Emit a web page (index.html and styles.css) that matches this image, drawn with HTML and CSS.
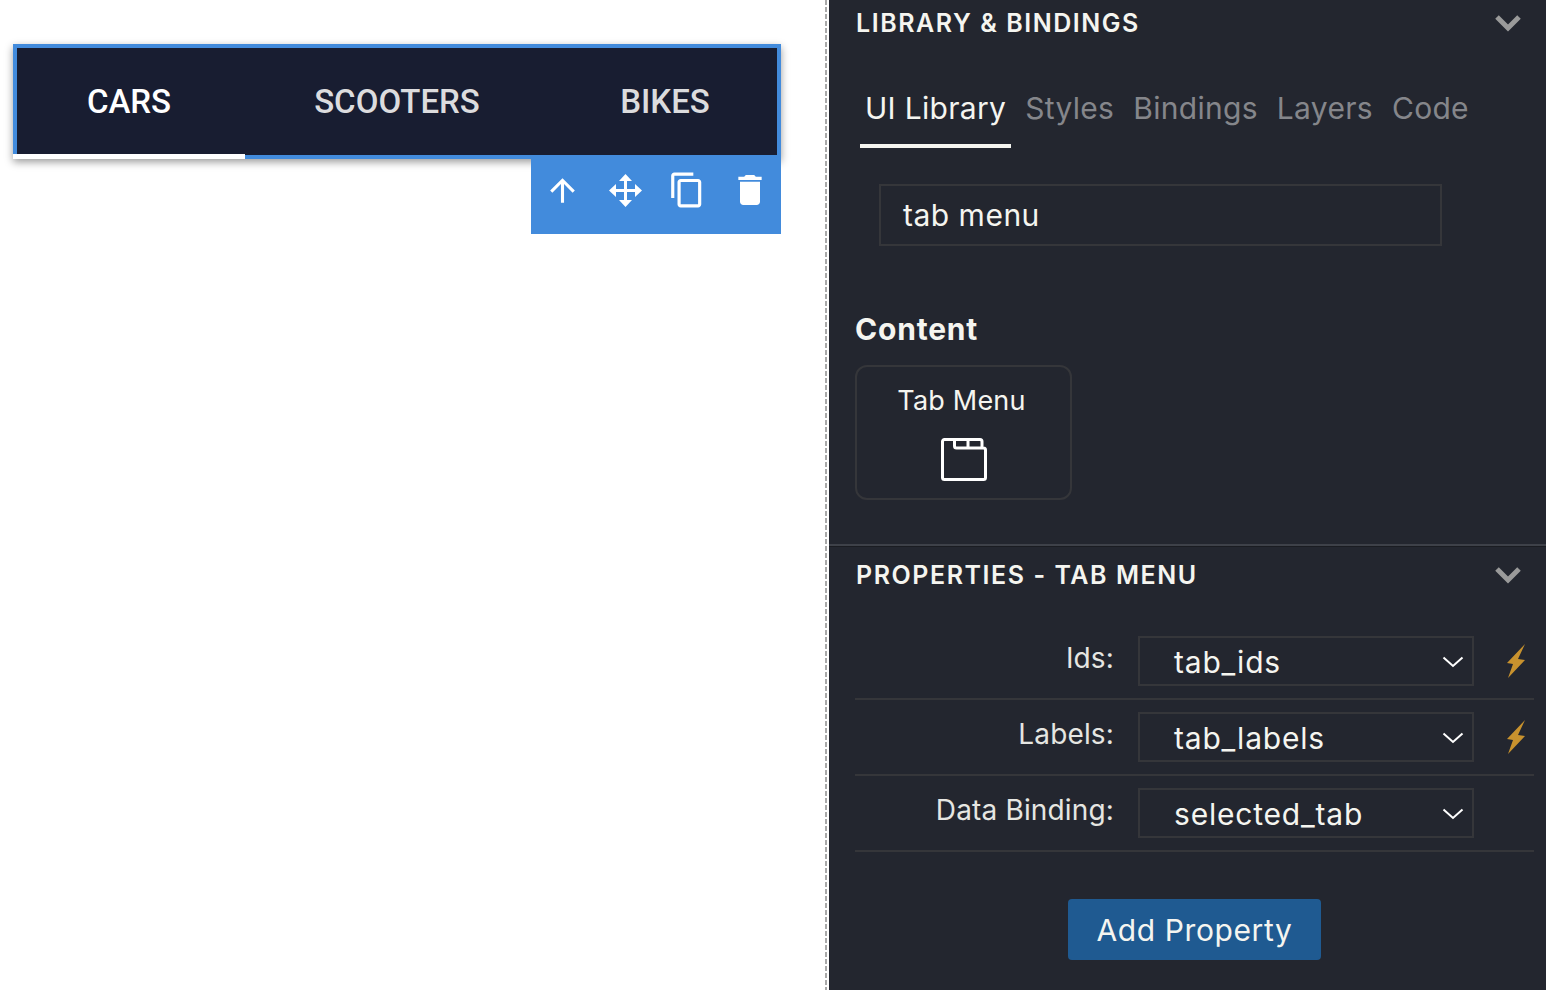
FILE: index.html
```html
<!DOCTYPE html>
<html lang="en">
<head>
    <meta charset="UTF-8">
    <title>Library and Bindings</title>
    <link rel="stylesheet" href="styles.css">
</head>
<body>
    <div class="app">
        <div class="canvas">
            <div class="selected">
                <div class="tabmenu">
                    <div class="tabitem tabitem-active">CARS</div>
                    <div class="tabitem tabitem-wide">SCOOTERS</div>
                    <div class="tabitem tabitem-last">BIKES</div>
                </div>
                <div class="toolbar">
                    <span class="toolbtn">
                        <svg width="37" height="37" viewBox="0 0 24 24"><path d="M4 12l1.41 1.41L11 7.83V20h2V7.83l5.58 5.59L20 12l-8-8-8 8z"/></svg>
                    </span>
                    <span class="toolbtn">
                        <svg class="moveicon" width="33" height="33" viewBox="0 0 33 33"><path d="M16.5 0L23 7h-5v8h8v-5l7 6.5-7 6.5v-5h-8v8h5l-6.5 7-6.5-7h5v-8H7v5L0 16.500 7 10v5h8V7h-5z"/></svg>
                    </span>
                    <span class="toolbtn">
                        <svg width="38" height="38" viewBox="0 0 24 24"><path d="M16 1H4c-1.1 0-2 .9-2 2v14h2V3h12V1zm3 4H8c-1.1 0-2 .9-2 2v14c0 1.1.9 2 2 2h11c1.1 0 2-.9 2-2V7c0-1.1-.9-2-2-2zm0 16H8V7h11v14z"/></svg>
                    </span>
                    <span class="toolbtn">
                        <svg width="40" height="40" viewBox="0 0 24 24"><path d="M6 19c0 1.1.9 2 2 2h8c1.1 0 2-.9 2-2V7H6v12zM19 4h-3.5l-1-1h-5l-1 1H5v2h14V4z"/></svg>
                    </span>
                </div>
            </div>
        </div>

        <div class="panel">
            <section class="library">
                <div class="panelhead">
                    <h2>LIBRARY &amp; BINDINGS</h2>
                    <svg class="caret" width="28" height="18" viewBox="0 0 28 18"><path d="M3 3l11 11L25 3"/></svg>
                </div>
                <div class="paneltabs">
                    <a class="paneltab paneltab-active">UI Library</a>
                    <a class="paneltab">Styles</a>
                    <a class="paneltab">Bindings</a>
                    <a class="paneltab">Layers</a>
                    <a class="paneltab">Code</a>
                </div>
                <div class="search">tab menu</div>
                <h3>Content</h3>
                <div class="card">
                    <div class="cardlabel">Tab Menu</div>
                    <svg class="cardicon" width="46" height="43" viewBox="0 0 46 43"><path d="M3.500 1.500H39a2 2 0 0 1 2 2V10h1.500a2 2 0 0 1 2 2v27.500a2 2 0 0 1-2 2h-39a2 2 0 0 1-2-2v-36a2 2 0 0 1 2-2zM13.500 1.500V8a2 2 0 0 0 2 2H41M27 1.500V10"/></svg>
                </div>
            </section>

            <section class="props">
                <div class="panelhead">
                    <h2>PROPERTIES - TAB MENU</h2>
                    <svg class="caret" width="28" height="18" viewBox="0 0 28 18"><path d="M3 3l11 11L25 3"/></svg>
                </div>
                <div class="proprows">
                    <div class="proprow">
                        <label>Ids:</label>
                        <div class="select">tab_ids<svg width="22" height="12" viewBox="0 0 22 12"><path d="M1.5 1.5L11 10l9.5-8.500"/></svg></div>
                        <svg class="bolt" width="18" height="34" viewBox="0 0 18 34"><path d="M18 0L0 19l6 1-5 14 17-18-7-1z"/></svg>
                    </div>
                    <div class="proprow">
                        <label>Labels:</label>
                        <div class="select">tab_labels<svg width="22" height="12" viewBox="0 0 22 12"><path d="M1.5 1.5L11 10l9.5-8.500"/></svg></div>
                        <svg class="bolt" width="18" height="34" viewBox="0 0 18 34"><path d="M18 0L0 19l6 1-5 14 17-18-7-1z"/></svg>
                    </div>
                    <div class="proprow">
                        <label>Data Binding:</label>
                        <div class="select">selected_tab<svg width="22" height="12" viewBox="0 0 22 12"><path d="M1.5 1.5L11 10l9.5-8.500"/></svg></div>
                    </div>
                </div>
                <div class="addwrap">
                    <button class="addbtn">Add Property</button>
                </div>
            </section>
        </div>
    </div>
</body>
</html>
```

FILE: styles.css
```css
* {
    margin: 0;
    padding: 0;
    box-sizing: border-box;
}
html, body {
    height: 100%;
    overflow: hidden;
}
body {
    background-color: #fff;
    font-family: "Inter", "Liberation Sans", sans-serif;
}
.app {
    display: flex;
    height: 990px;
}

/* left side, the page being edited */
.canvas {
    width: 829px;
    flex: none;
    padding: 44px 0 0 13px;
    background-color: #fff;
    background-image: repeating-linear-gradient(to bottom, #a9a9a9 0, #a9a9a9 5px, #fff 5px, #fff 7px);
    background-size: 2px 100%;
    background-position: 825px 0;
    background-repeat: no-repeat;
}
.selected {
    width: 768px;
    position: relative;
}
.tabmenu {
    display: flex;
    height: 115px;
    background-color: #181d31;
    border: 4px solid #428bdc;
    box-shadow: 0 3px 8px rgba(0, 0, 0, 0.4);
    font-family: "Roboto", "Liberation Sans", sans-serif;
    font-size: 33px;
    font-weight: 500;
    color: #dcdcde;
}
.tabitem {
    width: 228px;
    margin-bottom: -4px;
    display: flex;
    align-items: center;
    justify-content: center;
    padding-bottom: 5px;
}
.tabitem-wide {
    width: 304px;
}
.tabitem-active {
    color: #fff;
    position: relative;
    padding-right: 4px;
}
.tabitem-active::after {
    content: "";
    position: absolute;
    left: -4px;
    right: 0;
    bottom: 0;
    height: 5px;
    background-color: #fff;
}
.tabitem-last {
    padding-left: 4px;
}
.toolbar {
    position: absolute;
    right: 0;
    top: 111px;
    width: 250px;
    height: 79px;
    display: flex;
    background-color: #428bdc;
    padding-top: 35px;
}
.toolbtn {
    width: 62.5px;
    height: 0;
    display: flex;
    align-items: center;
    justify-content: center;
}
.toolbtn svg {
    fill: #fff;
    flex: none;
}
.toolbtn .moveicon {
    margin-left: 1px;
}

/* right side panel */
.panel {
    flex: 1;
    background-color: #23262f;
    color: #f5f5f0;
    overflow: hidden;
}
.library {
    height: 544px;
    padding: 0 12px 0 26px;
}
.props {
    padding: 0 12px 0 26px;
    border-top: 2px solid #3e4149;
    box-shadow: inset 0 1px 0 #1a1c22;
    height: 446px;
}
.panelhead {
    display: flex;
    justify-content: space-between;
    align-items: center;
    height: 46px;
}
.props .panelhead {
    height: 57px;
}
.panelhead h2 {
    font-size: 25px;
    font-weight: 600;
    letter-spacing: 1.55px;
    margin-left: 1px;
}
.caret {
    margin-right: 12px;
    fill: none;
    stroke: #9a9a9a;
    stroke-width: 5;
}
.paneltabs {
    display: flex;
    gap: 9px;
    margin: 36px 0 0 5px;
}
.paneltab {
    padding: 0 5px;
    height: 66px;
    line-height: 52px;
    font-size: 30px;
    letter-spacing: 0.3px;
    color: #85868b;
}
.paneltab-active {
    color: #f5f5f0;
    border-bottom: 4px solid #f5f5f0;
}
.search {
    width: 563px;
    height: 62px;
    margin: 36px 0 0 24px;
    border: 2px solid #35363a;
    padding-left: 22px;
    line-height: 58px;
    font-size: 30px;
    letter-spacing: 0.5px;
}
.library h3 {
    font-size: 30px;
    font-weight: 700;
    letter-spacing: 0.8px;
    margin-top: 65px;
    line-height: 36px;
}
.card {
    width: 217px;
    height: 135px;
    margin-top: 18px;
    border: 2px solid #35363a;
    border-radius: 12px;
    text-align: center;
}
.cardlabel {
    font-size: 27px;
    letter-spacing: 0.2px;
    line-height: 32px;
    margin: 18px 4px 0 0;
}
.cardicon {
    display: block;
    margin: 21px auto 0;
    fill: none;
    stroke: #fff;
    stroke-width: 3;
}
.proprows {
    margin-top: 21px;
}
.proprow {
    display: flex;
    align-items: center;
    height: 76px;
    border-bottom: 2px solid #35363a;
}
.proprow label {
    width: 259px;
    text-align: right;
    font-size: 28px;
    letter-spacing: 0.15px;
    color: #e6e6e2;
    margin-bottom: 7px;
}
.select {
    width: 336px;
    height: 50px;
    margin-left: 24px;
    border: 2px solid #35363a;
    padding: 2px 8px 0 34px;
    display: flex;
    align-items: center;
    justify-content: space-between;
    font-size: 30px;
    letter-spacing: 0.8px;
}
.select svg {
    fill: none;
    stroke: #fff;
    stroke-width: 2;
}
.bolt {
    margin-left: 33px;
    fill: #c8922e;
}
.addwrap {
    margin-top: 47px;
    display: flex;
    justify-content: center;
}
.addbtn {
    width: 253px;
    height: 61px;
    border: none;
    border-radius: 4px;
    background-color: #1f5a91;
    color: #f5f5f0;
    font-family: "Inter", "Liberation Sans", sans-serif;
    font-size: 30px;
    letter-spacing: 0.6px;
}
```
